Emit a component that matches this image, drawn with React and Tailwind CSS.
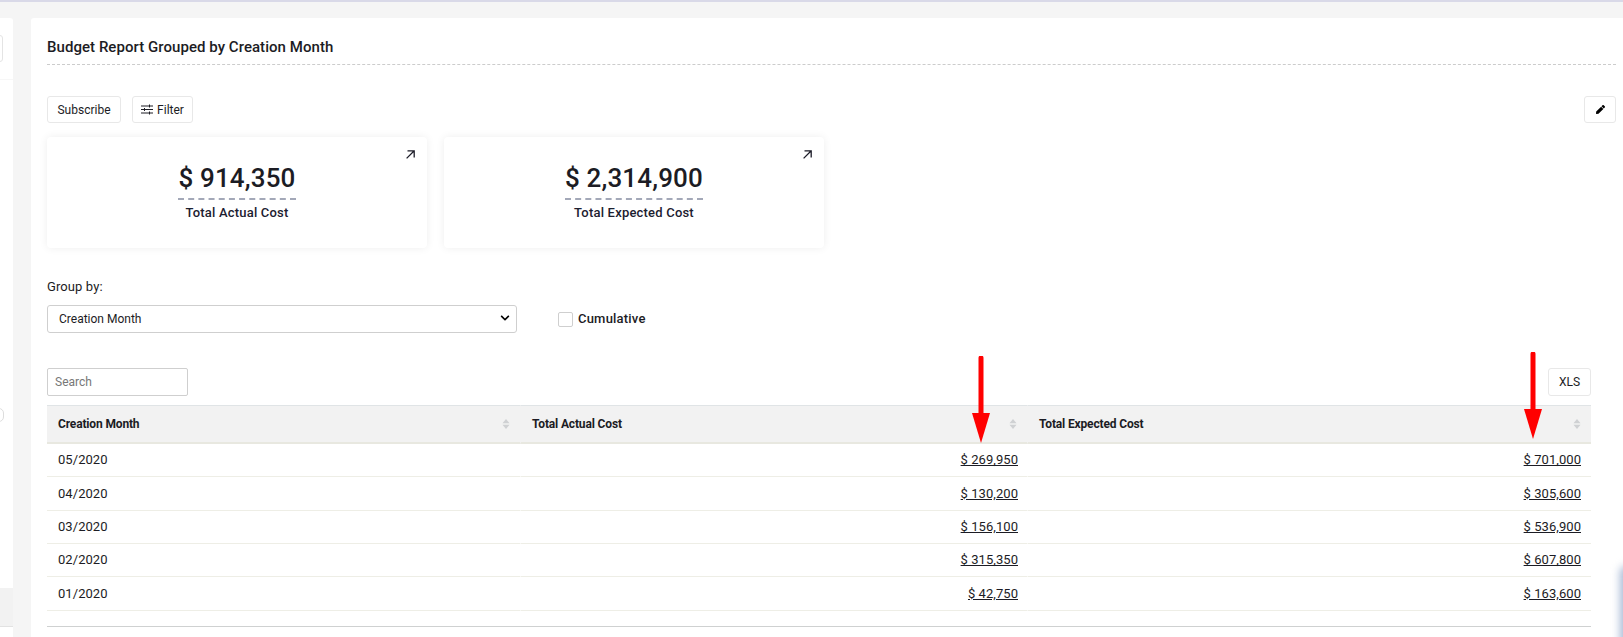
import { FaChevronDown, FaPen } from "react-icons/fa";

const rows = [
  { month: "05/2020", actual: "$ 269,950", expected: "$ 701,000" },
  { month: "04/2020", actual: "$ 130,200", expected: "$ 305,600" },
  { month: "03/2020", actual: "$ 156,100", expected: "$ 536,900" },
  { month: "02/2020", actual: "$ 315,350", expected: "$ 607,800" },
  { month: "01/2020", actual: "$ 42,750", expected: "$ 163,600" },
];

const SortIcon = () => (
  <svg width="8" height="10" viewBox="0 0 8 10" className="shrink-0">
    <path d="M4 0 L7.5 4.3 H0.5 Z" fill="#cfd1d3" />
    <path d="M4 10 L7.5 5.7 H0.5 Z" fill="#cfd1d3" />
  </svg>
);

const FilterIcon = () => (
  <svg width="12" height="11" viewBox="0 0 12 11" className="shrink-0">
    <path d="M0 2 H12 M0 5.5 H12 M0 9 H12 M8.5 0.5 V3.5 M3.5 4 V7 M8.5 7.5 V10.5" fill="none" stroke="#1c1c24" strokeWidth="1" />
  </svg>
);

const RedArrow = ({ className }) => (
  <svg width="20" height="88" viewBox="0 0 20 88" className={className}>
    <path d="M10 2 V58" stroke="#ff0000" strokeWidth="5" strokeLinecap="round" />
    <path d="M1 57 H19 L10 87 Z" fill="#ff0000" />
  </svg>
);

const ExpandIcon = () => (
  <svg width="9" height="9" viewBox="0 0 9 9" className="absolute top-[13px] right-[12px]">
    <path d="M1.5 0.8 H8.2 V7.5 M8 1 L0.6 8.4" fill="none" stroke="#1c1c28" strokeWidth="1.3" />
  </svg>
);

const KpiCard = ({ value, label }) => (
  <div className="relative w-[380px] h-[111px] bg-white rounded-[4px] shadow-[0_0_8px_rgba(0,0,0,0.07)] flex flex-col items-center pt-[21px]">
    <ExpandIcon />
    <span className="text-[26px] leading-[40px] font-medium text-[#1c1c24] tracking-[0.15px] border-b-2 border-dashed border-[#a3a8b8]">
      {value}
    </span>
    <span className="mt-[4px] text-[13px] leading-[18px] font-medium tracking-[0.2px] text-[#1c2030]">{label}</span>
  </div>
);

const HeadCell = ({ label, last }) => (
  <th className={`pl-[11px] pr-[10px] text-left border-t border-b-2 border-t-[#e0e4e6] border-b-[#e8e8e0] ${last ? "" : "border-r border-r-[#f2f2f2]"}`}>
    <div className="flex items-center justify-between">
      <span className="text-[12px] font-bold tracking-[-0.15px] text-[#1c1c24]">{label}</span>
      <SortIcon />
    </div>
  </th>
);

const App = () => {
  return (
    <div className="relative w-[1623px] h-[637px] overflow-hidden bg-[#f5f5f5] font-['Roboto',sans-serif] text-[#1c1c24]">
      <div className="h-[2px] bg-[#d9d9e8]" />
      <div className="flex gap-[18px] pt-[16px] h-[635px]">
        {/* Left panel, mostly off screen */}
        <div className="relative w-[13px] bg-white rounded-tr-[3px]">
          <div className="absolute top-[17px] right-[10px] w-[10px] h-[27px] border border-[#e4e4e4] rounded-[3px]" />
          <div className="absolute top-[61px] left-0 w-[13px] border-t border-[#f7f7f7]" />
          <div className="absolute top-[390px] -left-[6px] w-[10px] h-[14px] border border-[#dddddd] rounded-full" />
          <div className="absolute top-[570px] left-0 w-[13px] h-[39px] bg-[#f2f2f2] border-b border-[#e2e2e2]" />
        </div>

        {/* Report card */}
        <div className="flex-1 bg-white rounded-tl-[3px] pl-[16px] pr-[7px]">
          <h1 className="h-[47px] pt-[19px] text-[15px] leading-[20px] font-medium tracking-[0.05px] border-b border-dashed border-[#cccccc]">
            Budget Report Grouped by Creation Month
          </h1>

          <div className="mt-[31px] flex items-center justify-between">
            <div className="flex gap-[11px]">
              <button className="h-[27px] w-[74px] bg-white border border-[#e8e8e8] rounded-[3px] text-[12px]">
                Subscribe
              </button>
              <button className="h-[27px] w-[61px] bg-white border border-[#e8e8e8] rounded-[3px] text-[12px] flex items-center justify-center gap-[4px]">
                <FilterIcon />
                Filter
              </button>
            </div>
            <button className="h-[27px] w-[32px] bg-white border border-[#e8e8e8] rounded-[3px] flex items-center justify-center">
              <FaPen className="text-[9px] text-black" />
            </button>
          </div>

          <div className="mt-[14px] flex gap-[17px]">
            <KpiCard value="$ 914,350" label="Total Actual Cost" />
            <KpiCard value="$ 2,314,900" label="Total Expected Cost" />
          </div>

          <label className="block mt-[30px] text-[13px] leading-[18px] tracking-[0.1px]">Group by:</label>
          <div className="mt-[9px] flex items-center">
            <div className="relative w-[470px] h-[28px]">
              <select className="block w-full h-[28px] appearance-none bg-white border border-[#cfcfcf] rounded-[3px] pl-[11px] text-[12px] outline-none">
                <option>Creation Month</option>
              </select>
              <FaChevronDown className="absolute top-[8px] right-[7px] text-[10px] text-black" />
            </div>
            <span className="ml-[41px] w-[15px] h-[15px] border border-[#cfcfcf] rounded-[2px]" />
            <span className="ml-[5px] text-[13px] font-medium tracking-[0.2px]">Cumulative</span>
          </div>

          <div className="mt-[35px] w-[1544px]">
            <div className="flex items-center justify-between">
              <input
                placeholder="Search"
                className="w-[141px] h-[28px] border border-[#cfcfcf] rounded-[2px] px-[7px] text-[12px] outline-none placeholder:text-[#777777]"
              />
              <button className="h-[28px] w-[43px] bg-white border border-[#e8e8e8] rounded-[3px] text-[12px]">XLS</button>
            </div>

            <table className="mt-[9px] w-full table-fixed border-separate border-spacing-0">
              <colgroup>
                <col className="w-[474px]" />
                <col className="w-[507px]" />
                <col />
              </colgroup>
              <thead>
                <tr className="h-[39px] bg-[#f2f2f2]">
                  <HeadCell label="Creation Month" />
                  <HeadCell label="Total Actual Cost" />
                  <HeadCell label="Total Expected Cost" last />
                </tr>
              </thead>
              <tbody>
                {rows.map((row) => (
                  <tr key={row.month} className="h-[33.33px] text-[13px] tracking-[0.05px]">
                    <td className="px-[11px] border-b border-b-[#eeeee6] border-r border-r-white">{row.month}</td>
                    <td className="pl-[10px] pr-[9px] text-right underline border-b border-b-[#eeeee6] border-r border-r-white">{row.actual}</td>
                    <td className="px-[10px] text-right underline border-b border-b-[#eeeee6]">{row.expected}</td>
                  </tr>
                ))}
              </tbody>
            </table>
            <div className="mt-[15px] border-t border-[#cfd1d1]" />
          </div>
        </div>
      </div>

      {/* Annotation arrows drawn on the screenshot */}
      <RedArrow className="absolute top-[356px] left-[971px]" />
      <RedArrow className="absolute top-[352px] left-[1523px]" />

      {/* Blurred edge of something at the bottom right */}
      <div className="absolute top-[566px] left-[1620px] w-[24px] h-[90px] rounded-tl-[6px] bg-[#a9bad6] blur-[4px]" />
    </div>
  );
};

export default App;
